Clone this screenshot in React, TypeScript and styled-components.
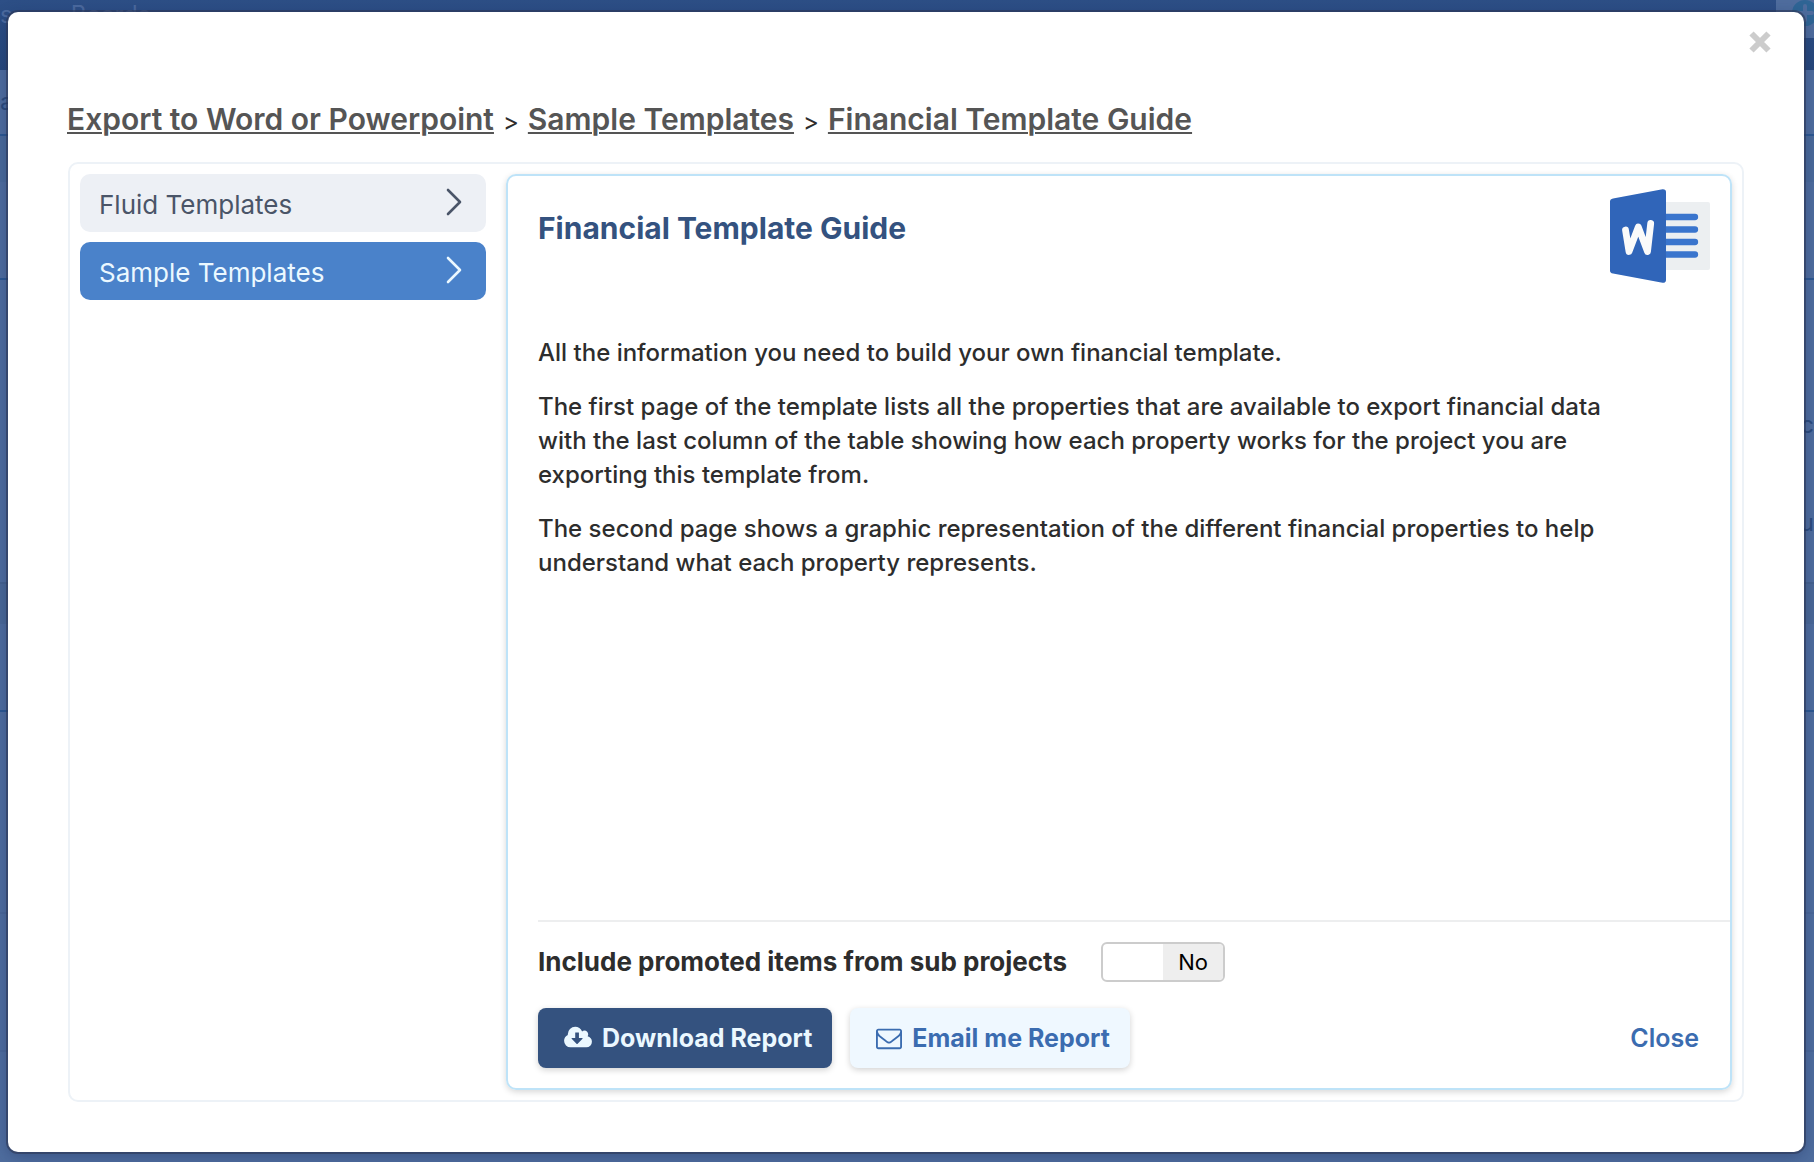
import React, { useState } from "react";
import styled, { createGlobalStyle } from "styled-components";

const GlobalStyle = createGlobalStyle`
  * { box-sizing: border-box; }
  html, body, #root { height: 100%; }
  body {
    margin: 0;
    font-family: Inter, "Liberation Sans", sans-serif;
    font-size: 24px;
    color: #2d2d2d;
    overflow: hidden;
  }
  button { font-family: inherit; cursor: pointer; }
`;

const Page = styled.div`
  position: relative;
  min-height: 100vh;
  background: #4f6d9e;
  display: flex;
`;

const Backdrop = styled.div`
  position: absolute;
  inset: 0;
  overflow: hidden;
  display: flex;
  flex-direction: column;
`;

const Topbar = styled.div`
  height: 70px;
  flex: none;
  background: linear-gradient(#2d4f86, #27477b);
  display: flex;
  justify-content: space-between;
  color: #4c6a9e;
  font-size: 24px;
  line-height: 30px;
`;

const TopTabs = styled.div`
  display: flex;
  gap: 58px;
`;

const AddBox = styled.div`
  width: 38px;
  height: 38px;
  padding-left: 16px;
  background: #4f6d9e;
`;

const Band = styled.div<{ $height: number; $color?: string; $line?: string; $bottom?: boolean }>`
  flex: none;
  height: ${(p) => p.$height}px;
  background: ${(p) => p.$color || "#4f6d9e"};
  border-bottom: 2px solid ${(p) => p.$line || "#2c5791"};
  display: flex;
  flex-direction: column;
  justify-content: ${(p) => (p.$bottom ? "flex-end" : "center")};
  padding-bottom: ${(p) => (p.$bottom ? "10px" : "0")};
  line-height: 98px;
  color: #2b4a7c;
`;

const BandText = styled.span<{ $right?: boolean }>`
  align-self: ${(p) => (p.$right ? "flex-end" : "flex-start")};
`;

const Modal = styled.main`
  position: relative;
  flex: 1;
  margin: 12px 10px 10px 8px;
  padding: 86px 60px 50px;
  background: #fff;
  border-radius: 10px;
  box-shadow: 0 0 0 2px rgba(45, 55, 85, 0.6), 0 4px 16px rgba(20, 40, 90, 0.4);
  display: flex;
  flex-direction: column;
`;

const Dismiss = styled.button`
  position: absolute;
  top: 18px;
  right: 32px;
  width: 24px;
  height: 24px;
  padding: 0;
  border: 0;
  background: none;
  color: #ccc;
  svg { display: block; }
`;

const Crumbs = styled.nav`
  display: flex;
  align-items: baseline;
  gap: 9px;
  height: 42px;
  line-height: 42px;
  margin: 0 0 22px -1px;
  color: #2d2d2d;
`;

const Crumb = styled.a`
  font-size: 30px;
  font-weight: 600;
  color: #555;
  text-decoration: underline;
  text-decoration-thickness: 2px;
  text-underline-offset: 2px;
`;

const Frame = styled.div`
  flex: 1;
  border: 2px solid #edf2f7;
  border-radius: 10px;
  padding: 10px;
  display: flex;
  gap: 20px;
`;

const Sidebar = styled.div`
  flex: 0 0 406px;
  display: flex;
  flex-direction: column;
  gap: 10px;
`;

const SideItem = styled.button<{ $active?: boolean }>`
  height: 58px;
  padding: 0 21px 0 19px;
  border: 0;
  border-radius: 10px;
  display: flex;
  align-items: center;
  justify-content: space-between;
  font-size: 26px;
  line-height: 32px;
  color: ${(p) => (p.$active ? "#ebf8ff" : "#4a5568")};
  background: ${(p) => (p.$active ? "#4a82ca" : "#edf0f5")};
`;

const SideName = styled.span`
  padding-top: 3px;
`;

const Card = styled.section`
  flex: 1;
  border: 2px solid #bee3f8;
  border-radius: 10px;
  box-shadow: 0 2px 6px rgba(0, 0, 0, 0.16);
  padding: 13px 0 20px 30px;
  display: flex;
  flex-direction: column;
`;

const CardHead = styled.header`
  display: flex;
  justify-content: space-between;
  padding-right: 20px;
  height: 147px;
`;

const Title = styled.h1`
  margin: 21px 0 0;
  font-size: 30px;
  line-height: 36px;
  font-weight: 700;
  color: #34527f;
`;

const Description = styled.div`
  flex: 1;
  padding-right: 100px;
  font-weight: 500;
  line-height: 34px;
  p { margin: 0 0 20px; }
`;

const Footer = styled.footer`
  border-top: 2px solid #edeeef;
`;

const OptionRow = styled.div`
  display: flex;
  align-items: center;
  gap: 34px;
  margin: 20px 0 26px;
  height: 40px;
`;

const OptionLabel = styled.label`
  font-size: 26px;
  line-height: 32px;
  font-weight: 700;
`;

const Toggle = styled.label`
  position: relative;
  display: flex;
  width: 124px;
  height: 40px;
  border: 2px solid #ccc;
  border-radius: 6px;
  overflow: hidden;
  font-size: 22px;
  line-height: 36px;
  color: #000;
  background: #fff;
  cursor: pointer;
`;

const ToggleInput = styled.input`
  position: absolute;
  inset: 0;
  margin: 0;
  opacity: 0;
`;

const ToggleValue = styled.span<{ $on: boolean }>`
  width: 50%;
  margin-left: ${(p) => (p.$on ? "0" : "50%")};
  text-align: center;
  background: #eee;
`;

const Actions = styled.div`
  display: flex;
  gap: 18px;
  padding-right: 31px;
`;

const ActionButton = styled.button<{ $primary?: boolean }>`
  height: 60px;
  padding: 0 20px 0 26px;
  border: 0;
  border-radius: 8px;
  display: flex;
  align-items: center;
  gap: 10px;
  font-size: 25px;
  line-height: 32px;
  font-weight: 700;
  color: ${(p) => (p.$primary ? "#ebf8ff" : "#3b6cb0")};
  background: ${(p) => (p.$primary ? "#34527f" : "#eff8ff")};
  box-shadow: 0 2px 6px rgba(0, 0, 0, 0.18);
`;

const CloseButton = styled.button`
  margin-left: auto;
  height: 60px;
  padding: 0;
  border: 0;
  background: none;
  font-size: 25px;
  line-height: 32px;
  font-weight: 600;
  color: #3b6cb0;
`;

const Chevron = () => (
  <svg width="20" height="30" viewBox="0 0 20 30" fill="none" stroke="currentColor" strokeWidth="2.6" strokeLinecap="round" strokeLinejoin="round" aria-hidden="true">
    <path d="M3 2 L15 14 L3 26" />
  </svg>
);

const WordIcon = () => (
  <svg width="100" height="94" viewBox="0 0 100 94" role="img" aria-label="Word document">
    <path d="M54 13H98a2 2 0 0 1 2 2V79a2 2 0 0 1-2 2H54z" fill="#eceff1" />
    <path d="M50 28H85M50 40.5H85M50 53H85M50 65.5H85" stroke="#3a75cd" strokeWidth="6.3" strokeLinecap="round" />
    <path d="M3 9.5 L52.500 .2 Q56 0 56 3 V91 Q56 94 52.500 93.800 L3 84.500 Q0 84 0 81.500 V12.500 Q0 10 3 9.500Z" fill="#3065b9" />
    <path d="M15.500 41 L19 62.500 L28.300 38 L37.500 62.500 L40.700 34.500" fill="none" stroke="#fafafa" strokeWidth="6.800" strokeLinecap="round" strokeLinejoin="round" />
  </svg>
);

const CloudIcon = () => (
  <svg width="28" height="26" viewBox="0 0 1920 1792" fill="currentColor" aria-hidden="true">
    <path d="M1280 928q0-14-9-23t-23-9h-224v-352q0-13-9.500-22.500t-22.500-9.500h-192q-13 0-22.500 9.500t-9.500 22.500v352h-224q-13 0-22.500 9.500t-9.500 22.500q0 14 9 23l352 352q9 9 23 9t23-9l351-351q10-12 10-24zm640 224q0 159-112.500 271.500t-271.500 112.500h-1088q-185 0-316.500-131.500t-131.500-316.500q0-130 70-240t188-165q-2-30-2-43 0-212 150-362t362-150q156 0 285.500 87t188.500 231q71-62 166-62 106 0 181 75t75 181q0 76-41 138 130 31 213.500 135.500t83.500 238.500z" />
  </svg>
);

const EnvelopeIcon = () => (
  <svg width="26" height="26" viewBox="0 0 1792 1792" fill="currentColor" aria-hidden="true">
    <path d="M1664 1504v-768q-32 36-69 66-268 206-426 338-51 43-83 67t-86.500 48.500-102.500 24.500h-2q-48 0-102.500-24.500t-86.500-48.500-83-67q-158-132-426-338-37-30-69-66v768q0 13 9.500 22.500t22.500 9.500h1472q13 0 22.500-9.500t9.500-22.500zm0-1051v-24.500l-.5-13-3-12.500-5.500-9-9-7.500-14-2.500h-1472q-13 0-22.500 9.500t-9.500 22.500q0 168 147 284 193 152 401 317 6 5 35 29.500t46 37.500 44.500 31.500 50.500 27.500 43 9h2q20 0 43-9t50.500-27.500 44.500-31.500 46-37.500 35-29.500q208-165 401-317 54-43 100.500-115.500t46.500-131.500zm128-37v1088q0 66-47 113t-113 47h-1472q-66 0-113-47t-47-113v-1088q0-66 47-113t113-47h1472q66 0 113 47t47 113z" />
  </svg>
);

const CrossIcon = () => (
  <svg width="24" height="24" viewBox="0 0 24 24" stroke="currentColor" strokeWidth="6" aria-hidden="true">
    <path d="M3.500 3.500L20.500 20.500M20.500 3.500L3.500 20.500" />
  </svg>
);

const PlusBadge = () => (
  <svg width="26" height="26" viewBox="0 0 26 26" aria-hidden="true">
    <circle cx="13" cy="13" r="13" fill="#2f6595" />
    <path d="M13 6v14M6 13h14" stroke="#4f6d9e" strokeWidth="4" strokeLinecap="round" />
  </svg>
);

export default function App() {
  const [included, setIncluded] = useState(false);
  const [section, setSection] = useState("Sample Templates");

  return (
    <Page>
      <GlobalStyle />
      <Backdrop aria-hidden="true">
        <Topbar>
          <TopTabs><span>s</span><span>Boards</span></TopTabs>
          <AddBox><PlusBadge /></AddBox>
        </Topbar>
        <Band $height={66}><BandText>a</BandText></Band>
        <Band $height={144} $color="linear-gradient(#4a6a9a 46px, #4f6d9e 46px)" />
        <Band $height={304} $line="#45628f" $bottom><BandText $right>c</BandText><BandText $right>u</BandText></Band>
        <Band $height={128} $color="linear-gradient(#4a6897 40px, #4f6d9e 40px)" />
        <Band $height={202} $line="#4a6798" />
        <Band $height={138} $line="#4a6798" />
      </Backdrop>
      <Modal role="dialog" aria-label="Financial Template Guide">
        <Dismiss type="button" aria-label="Dismiss"><CrossIcon /></Dismiss>
        <Crumbs aria-label="Breadcrumb">
          <Crumb href="#export">Export to Word or Powerpoint</Crumb>
          <span>&gt;</span>
          <Crumb href="#samples">Sample Templates</Crumb>
          <span>&gt;</span>
          <Crumb href="#guide">Financial Template Guide</Crumb>
        </Crumbs>
        <Frame>
          <Sidebar>
            {["Fluid Templates", "Sample Templates"].map((name) => (
              <SideItem key={name} type="button" $active={section === name} onClick={() => setSection(name)}>
                <SideName>{name}</SideName>
                <Chevron />
              </SideItem>
            ))}
          </Sidebar>
          <Card>
            <CardHead>
              <Title>Financial Template Guide</Title>
              <WordIcon />
            </CardHead>
            <Description>
              <p>All the information you need to build your own financial template.</p>
              <p>
                The first page of the template lists all the properties that are available to export financial data
                with the last column of the table showing how each property works for the project you are exporting
                this template from.
              </p>
              <p>
                The second page shows a graphic representation of the different financial properties to help
                understand what each property represents.
              </p>
            </Description>
            <Footer>
              <OptionRow>
                <OptionLabel htmlFor="include-promoted">Include promoted items from sub projects</OptionLabel>
                <Toggle>
                  <ToggleInput
                    id="include-promoted"
                    type="checkbox"
                    checked={included}
                    onChange={(e) => setIncluded(e.target.checked)}
                  />
                  <ToggleValue $on={included}>{included ? "Yes" : "No"}</ToggleValue>
                </Toggle>
              </OptionRow>
              <Actions>
                <ActionButton type="button" $primary><CloudIcon />Download Report</ActionButton>
                <ActionButton type="button"><EnvelopeIcon />Email me Report</ActionButton>
                <CloseButton type="button">Close</CloseButton>
              </Actions>
            </Footer>
          </Card>
        </Frame>
      </Modal>
    </Page>
  );
}
